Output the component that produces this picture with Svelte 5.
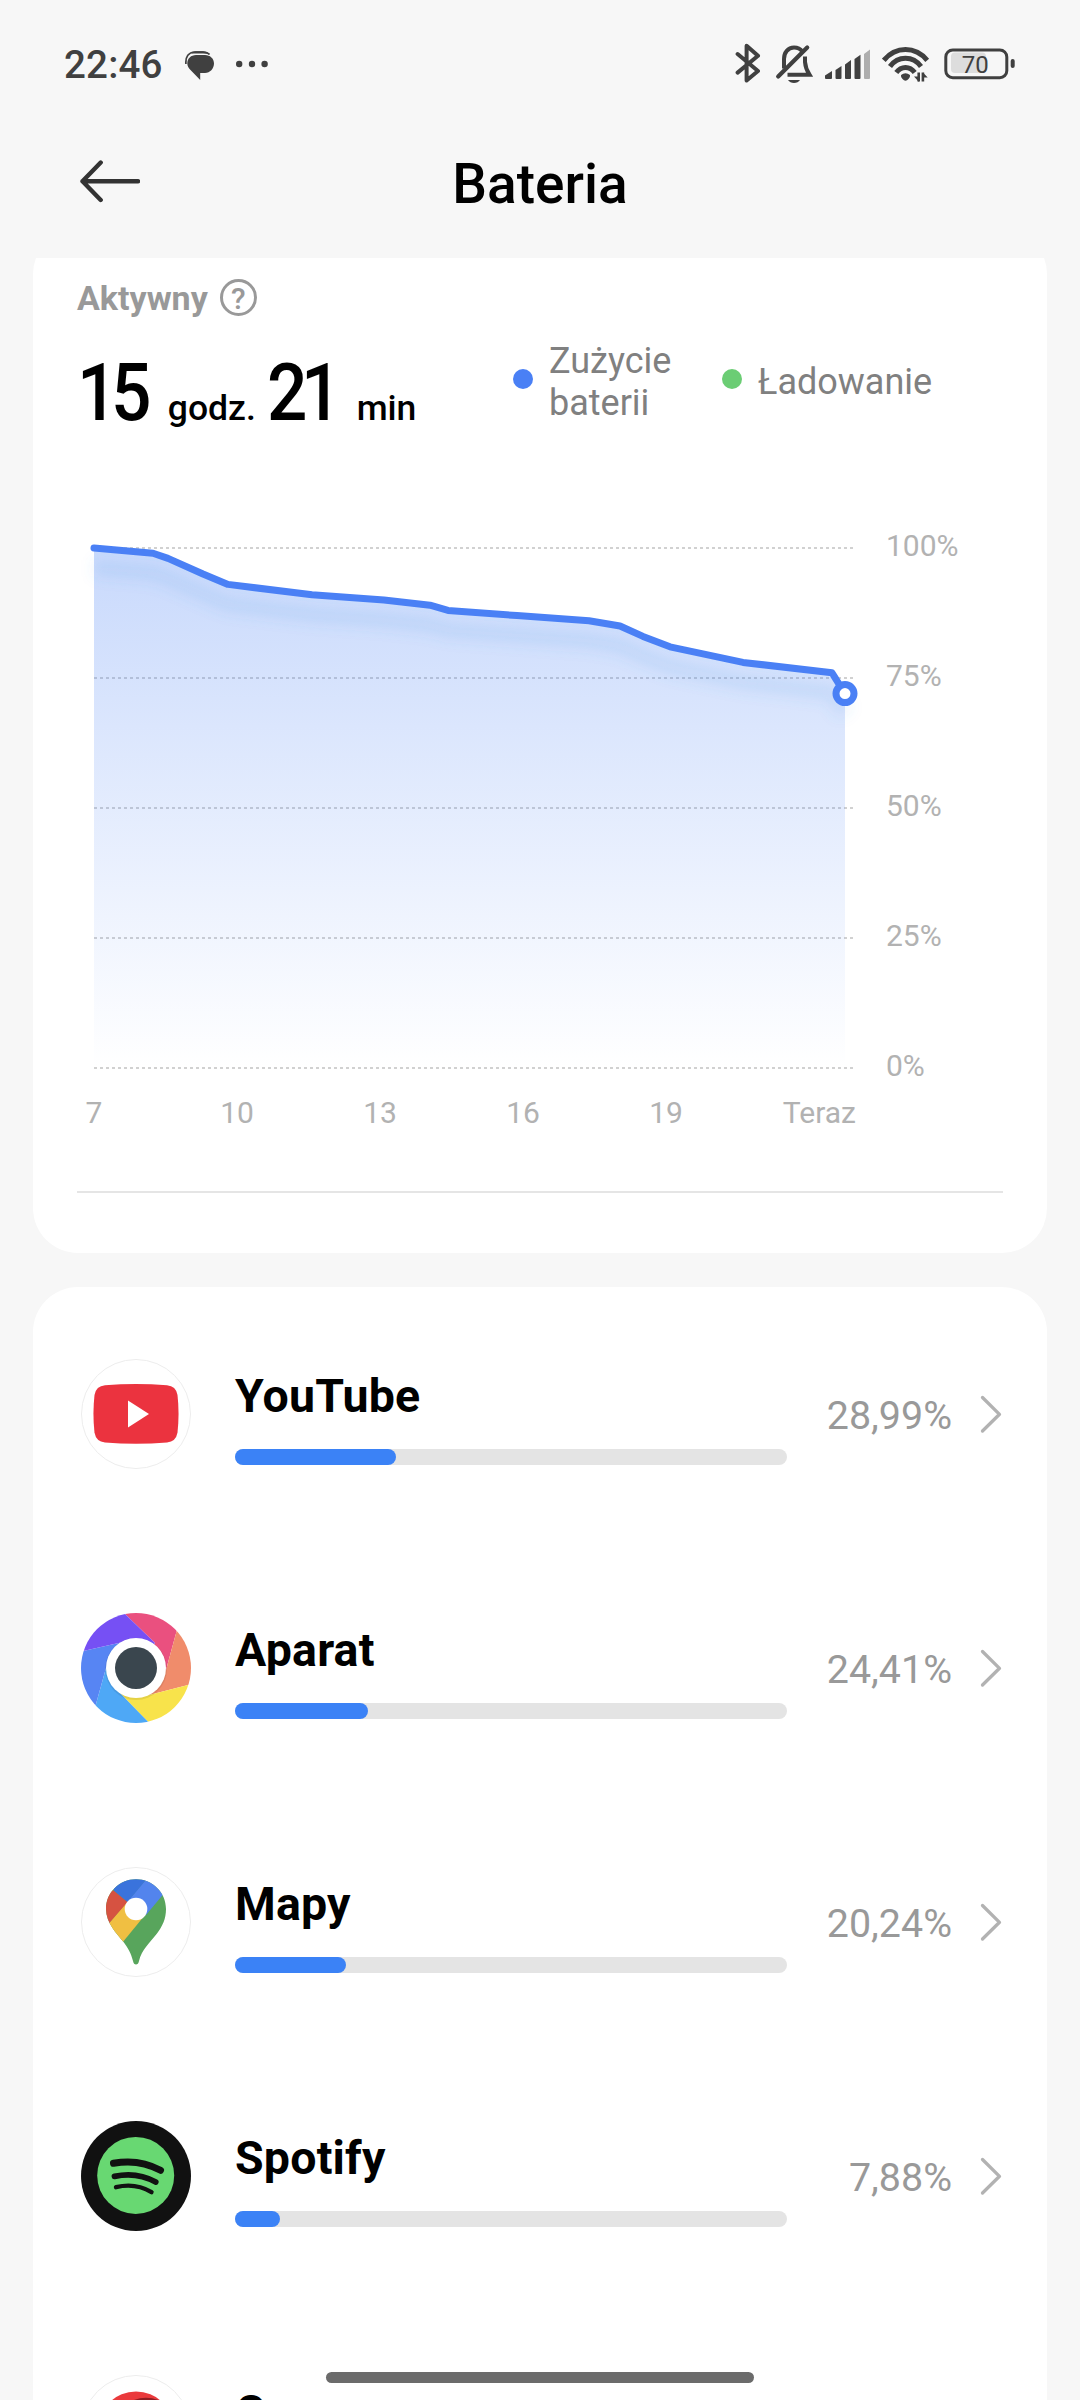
<script lang="ts">
	type App = {
		id: string;
		name: string;
		percent?: string;
		fill: number;
	};

	const apps: App[] = [
		{ id: 'youtube', name: 'YouTube', percent: '28,99%', fill: 29.2 },
		{ id: 'camera', name: 'Aparat', percent: '24,41%', fill: 24.1 },
		{ id: 'maps', name: 'Mapy', percent: '20,24%', fill: 20.1 },
		{ id: 'spotify', name: 'Spotify', percent: '7,88%', fill: 8.2 },
		{ id: 'opera', name: 'O', fill: 5.1 }
	];

	// x offset in the chart, battery level
	const history = [
		[17, 100],
		[76, 99],
		[91, 98],
		[126, 95],
		[151, 93],
		[235, 91],
		[307, 90],
		[353, 89],
		[371, 88],
		[440, 87],
		[512, 86],
		[543, 85],
		[566, 83],
		[593, 81],
		[666, 78],
		[755, 76],
		[768, 72]
	];

	const levels = [100, 75, 50, 25, 0];
	const hours = ['7', '10', '13', '16', '19'];

	const levelY = (level: number) => 48 + (100 - level) * 5.2;

	const points = history.map(([x, level]) => `${x},${levelY(level)}`).join(' ');
	const area = `17,568 ${points} 768,568`;
	const [lastX, lastLevel] = history[history.length - 1];
</script>

{#snippet appIcon(id: string)}
	<svg class="app-icon" viewBox="0 0 110 110">
		{#if id === 'youtube'}
			<circle class="rim" cx="55" cy="55" r="54.5" />
			<path
				fill="#eb333f"
				d="M24 26.2Q55 23.800 86 26.200Q95 27 96.500 36Q98.600 55 96.500 73.500Q95 82.600 86 83.500Q55 86 24 83.500Q15 82.600 13.500 73.500Q11.400 55 13.500 36Q15 27 24 26.200Z"
			/>
			<path fill="#fff" d="M47 41.500V68.500L68 55Z" />
		{:else if id === 'camera'}
			<clipPath id="camera-clip"><circle cx="55" cy="55" r="55" /></clipPath>
			<g clip-path="url(#camera-clip)">
				<path fill="#ea507f" d="M44 1L43 -10H110L95.700 17.700L85 57L55 55L74 30Z" />
				<path fill="#f08c6b" d="M95.700 17.700L110 -10H125V68L107 72L68 82L55 55L85 57Z" />
				<path fill="#f8e34b" d="M107 72L125 67V125H70L67 108.700L38 79L55 55L68 82Z" />
				<path fill="#4ea8f6" d="M67 108.700L84 125H0L15 91L25 55L55 55L38 79Z" />
				<path fill="#5785f3" d="M15 91L0 125V38.500L2.300 38L42 29L55 55L25 55Z" />
				<path fill="#7650f4" d="M2.300 38L-10 41V-10H33L44 1L74 30L55 55L42 29Z" />
			</g>
			<circle cx="55" cy="56" r="31" fill="#000" opacity="0.08" />
			<circle cx="55" cy="55" r="30" fill="#fff" />
			<circle cx="55" cy="55" r="21" fill="#3a464e" />
		{:else if id === 'maps'}
			<circle class="rim" cx="55" cy="55" r="54.5" />
			<clipPath id="pin-clip">
				<path
					d="M55 12.300C71.500 12.300 85 25.500 85 42C85 52 81.500 59 76 66.500C69 75.500 60.500 83 58 94C57.300 98.700 52.700 98.700 52 94C50 86 47 81 42.300 74.700C36 67 25 56 25 42C25 25.500 38.500 12.300 55 12.300Z"
				/>
			</clipPath>
			<g clip-path="url(#pin-clip)">
				<rect x="20" y="8" width="70" height="95" fill="#58a55c" />
				<path fill="#f0bf42" d="M24 61L46 35L64 48L39 78.500L20 78Z" />
				<path fill="#d65241" d="M33 23.700L46.500 35L24 61H10V20Z" />
				<path fill="#5384ed" d="M68 9L90 18L65 48L46 35Z" />
				<path fill="#3a73dc" d="M33 23.700L30 5H71.500L46.500 35Z" />
			</g>
			<circle cx="55" cy="42" r="11.300" fill="#fff" />
		{:else if id === 'spotify'}
			<circle cx="55" cy="55" r="55" fill="#111" />
			<circle cx="54.700" cy="54.400" r="38.500" fill="#68d872" />
			<g fill="none" stroke="#111" stroke-linecap="round">
				<path stroke-width="7" d="M32.500 42.300Q58 37.500 79.500 49.300" />
				<path stroke-width="5.800" d="M33.500 55.300Q56 50.500 74.700 61" />
				<path stroke-width="4.400" d="M35 66.200Q54.500 61.500 70.500 71.200" />
			</g>
		{:else}
			<circle class="rim" cx="55" cy="55" r="54.500" />
			<circle cx="55" cy="54" r="37.500" fill="#ea3a3c" />
			<path fill="#8f1d22" d="M53 25Q66 20 80 26Q92 38 92 54T80 82Q62 88 46 82Q62 54 53 25Z" />
			<ellipse cx="55" cy="54" rx="15" ry="25" fill="#fff" />
		{/if}
	</svg>
{/snippet}

<div class="screen">
	<div class="status-bar">
		<span class="clock">22:46</span>
		<svg class="chat" width="30" height="30" viewBox="0 0 30 30">
			<path
				fill="#404040"
				d="M11 4H20C25 4 29 7.500 29 12.500S25 22 20 22H15.200V29L6 19.500C3.500 17 2.300 15 2.300 12.500C2.300 7.500 6 4 11 4Z"
			/>
			<path fill="none" stroke="#404040" stroke-width="1.700" d="M0.900 13C0.400 5.500 3.500 1.300 10 1H18Q22 1 24.500 3.300" />
			<path fill="#404040" d="M6 2.400Q8 0.300 11 0.300H18Q22.500 0.300 25 3.500Q21 2.600 18 2.600H10Z" />
		</svg>
		<svg class="dots" width="32" height="8" viewBox="0 0 32 8" fill="#404040">
			<circle cx="3.200" cy="4" r="3.200" />
			<circle cx="16" cy="4" r="3.200" />
			<circle cx="28.600" cy="4" r="3.200" />
		</svg>

		<svg class="bluetooth" width="26" height="44" viewBox="0 0 26 44">
			<path
				fill="none"
				stroke="#404040"
				stroke-width="4"
				stroke-linecap="round"
				stroke-linejoin="round"
				d="M2.600 12L23 29L11.600 38.500V3.700L23 13.800L2.600 30.600"
			/>
		</svg>
		<svg class="bell" width="38" height="44" viewBox="0 0 38 44" fill="none" stroke="#404040">
			<path
				stroke-width="4"
				d="M9 26.500V17C9 10.500 13 5.600 19 5.600C22.500 5.600 25.500 7 27.300 9.500M30 14.500V20Q30.500 26.500 34.500 32.700H12.500"
			/>
			<path stroke-width="4.200" stroke-linecap="round" d="M3.200 34.500L32.200 5.400" />
			<path fill="#404040" stroke="none" d="M13 38H25Q23 41 19 41T13 38Z" />
		</svg>
		<svg class="signal" width="46" height="44" viewBox="0 0 46 44" fill="#404040">
			<path d="M0 33.500L7 29V36Q7 37 6 37H1Q0 37 0 36Z" />
			<path d="M10.500 28L16.500 24V36Q16.500 37 15.500 37H11.500Q10.500 37 10.500 36Z" />
			<path d="M20 22.500L26 18V36Q26 37 25 37H21Q20 37 20 36Z" />
			<path d="M29.500 17L35.500 12.700V36Q35.500 37 34.500 37H30.500Q29.500 37 29.500 36Z" />
			<path fill="#aeaeae" d="M39 12L45 7.600V36Q45 37 44 37H40Q39 37 39 36Z" />
		</svg>
		<svg class="wifi" width="48" height="44" viewBox="0 0 48 44" fill="none" stroke="#404040">
			<path stroke-width="5" d="M1.800 18.300Q11 7.600 23.500 7.600T45.200 18.300" />
			<path stroke-width="5" d="M8 24.500Q14 16.300 23.500 16.300T39 24.500" />
			<path stroke-width="5" d="M14.300 30.500Q18 25.500 23.500 25.500T32.700 30.500" />
			<path fill="#404040" stroke="none" d="M19 33Q23.500 29.500 28 33Q28.500 35 26.500 37Q23.500 40.500 20.500 37Q18.500 35 19 33Z" />
			<path stroke-width="2.600" d="M36.700 30.500V39.500M40.900 39.500V30.500" />
			<path fill="#404040" stroke="none" d="M32 34.500H37V40ZM45.700 35.500H41V30.500Z" />
		</svg>
		<svg class="battery" width="72" height="44" viewBox="0 0 72 44">
			<rect x="7" y="10.500" width="35" height="20.500" rx="4" fill="#ddd" />
			<rect x="1.800" y="7.900" width="61" height="27.800" rx="7" fill="none" stroke="#404040" stroke-width="3" />
			<rect x="66.700" y="17" width="4" height="9" rx="2" fill="#404040" />
			<text class="charge" x="31.300" y="30.600">70</text>
		</svg>
	</div>

	<header>
		<svg class="back" width="62" height="44" viewBox="0 0 62 44">
			<path
				fill="none"
				stroke="#333"
				stroke-width="4.400"
				stroke-linecap="round"
				stroke-linejoin="round"
				d="M60 22.300H4.500M22.700 3.500L4.500 22.300L22.700 41"
			/>
		</svg>
		<h1>Bateria</h1>
	</header>

	<main>
		<section class="card usage">
			<div class="active">
				<span>Aktywny</span>
				<span class="help">?</span>
			</div>
			<div class="summary">
				<div class="time">
					<span class="number">15</span>
					<span class="unit">godz.</span>
					<span class="number second">21</span>
					<span class="unit last">min</span>
				</div>
				<div class="legend">
					<span class="dot"></span>
					<span class="drain">Zużycie baterii</span>
					<span class="dot green"></span>
					<span>Ładowanie</span>
				</div>
			</div>

			<svg class="chart" width="926" height="640" viewBox="0 0 926 640">
				<defs>
					<linearGradient id="fade" gradientUnits="userSpaceOnUse" x1="0" y1="48" x2="0" y2="568">
						<stop offset="0" stop-color="#4880f5" stop-opacity="0.3" />
						<stop offset="1" stop-color="#4880f5" stop-opacity="0" />
					</linearGradient>
					<filter id="glow" filterUnits="userSpaceOnUse" x="0" y="20" width="820" height="240">
						<feGaussianBlur stdDeviation="7" />
					</filter>
				</defs>
				{#each levels as level}
					<line class="grid" x1="17" x2="777" y1={levelY(level)} y2={levelY(level)} />
					<text class="label" x="809" y={levelY(level) + 8}>{level}%</text>
				{/each}
				<polygon points={area} fill="url(#fade)" />
				<polyline class="shadow" {points} transform="translate(0 20)" filter="url(#glow)" />
				<polyline class="line" {points} />
				<circle class="marker" cx={lastX} cy={levelY(lastLevel)} r="9" />
				{#each hours as hour, i}
					<text class="label hour" x={17 + i * 143} y="623">{hour}</text>
				{/each}
				<text class="label now" x="779" y="623">Teraz</text>
			</svg>
			<hr />
		</section>

		<section class="card">
			{#each apps as app (app.id)}
				<div class="app">
					{@render appIcon(app.id)}
					<div class="info">
						<span class="name">{app.name}</span>
						<div class="track">
							<div class="fill" style:width={`${app.fill}%`}></div>
						</div>
					</div>
					<span class="percent">{app.percent ?? ''}</span>
					<svg class="chevron" width="24" height="40" viewBox="0 0 24 40">
						<path
							fill="none"
							stroke="#b2b2b2"
							stroke-width="3.300"
							stroke-linecap="round"
							stroke-linejoin="round"
							d="M3.500 3.500L20.500 20.300L3.500 37"
						/>
					</svg>
				</div>
			{/each}
		</section>
	</main>

	<div class="home-bar"></div>
</div>

<style>
	:global(body) {
		margin: 0;
		background: #f7f7f7;
	}

	.screen {
		position: relative;
		display: flex;
		flex-direction: column;
		width: 1080px;
		height: 2400px;
		overflow: hidden;
		background: #f7f7f7;
		font-family: Roboto, 'Noto Sans', sans-serif;
		color: #000;
	}

	svg {
		display: block;
		flex: none;
	}

	.status-bar {
		display: flex;
		align-items: center;
		height: 128px;
		box-sizing: border-box;
		padding: 0 64px 0 64px;
	}

	.clock {
		width: 121px;
		padding-top: 2px;
		font-size: 38.5px;
		font-weight: 500;
		line-height: 44px;
		letter-spacing: 0.2px;
		color: #404040;
	}

	.chat {
		margin-top: 4px;
	}

	.dots {
		margin-left: 21px;
	}

	.bluetooth {
		margin-left: auto;
	}

	.bell {
		margin-left: 14px;
	}

	.signal {
		margin-left: 12px;
	}

	.wifi {
		margin-left: 11px;
	}

	.battery {
		margin-left: 14px;
	}

	.charge {
		font-size: 24px;
		text-anchor: middle;
		fill: #404040;
	}

	header {
		display: grid;
		grid-template-columns: 62px 1fr 62px;
		align-items: center;
		height: 130px;
		box-sizing: border-box;
		padding: 0 78px 24px;
	}

	h1 {
		margin: 6px 0 0;
		font-size: 55px;
		font-weight: 500;
		line-height: 64px;
		text-align: center;
	}

	main {
		display: flex;
		flex: 1;
		flex-direction: column;
		gap: 34px;
		min-height: 0;
		overflow: hidden;
		padding: 0 33px;
	}

	.card {
		flex: none;
		border-radius: 45px;
		background: #fff;
	}

	.usage {
		margin-top: -29px;
		padding: 49px 44px 60px;
	}

	.active {
		display: flex;
		align-items: center;
		gap: 12px;
		height: 40px;
		font-size: 34px;
		font-weight: 700;
		color: #999;
	}

	.help {
		width: 31px;
		height: 31px;
		margin-bottom: 1px;
		border: 3px solid #999;
		border-radius: 50%;
		font-size: 30px;
		font-weight: 500;
		line-height: 33px;
		text-align: center;
	}

	.summary {
		display: flex;
		align-items: center;
		height: 127px;
	}

	.time {
		display: flex;
		align-items: baseline;
		width: 436px;
		margin-top: 39px;
		line-height: 93px;
		white-space: nowrap;
	}

	/* digits are narrower than the regular text face */
	.number {
		font-size: 79px;
		font-weight: 500;
		letter-spacing: -7px;
		transform: scaleX(0.9);
		transform-origin: left;
	}

	.second {
		margin-left: 11px;
	}

	.unit {
		margin-left: 15px;
		font-size: 35.5px;
		font-weight: 500;
	}

	.last {
		margin-left: 14px;
	}

	.legend {
		display: flex;
		align-items: center;
		font-size: 36px;
		line-height: 42px;
		color: #808080;
	}

	.drain {
		width: 173px;
	}

	.dot {
		width: 20px;
		height: 20px;
		margin: 0 16px 6px 0;
		border-radius: 50%;
		background: #4a80f5;
	}

	.green {
		background: #6bcd74;
	}

	.chart {
		margin-top: 55px;
	}

	.grid {
		stroke: #000;
		stroke-opacity: 0.18;
		stroke-width: 2;
		stroke-dasharray: 3 3;
	}

	.label {
		font-size: 30px;
		fill: #b2b2b2;
	}

	.hour {
		text-anchor: middle;
	}

	.now {
		text-anchor: end;
	}

	.line {
		fill: none;
		stroke: #4a80f5;
		stroke-width: 7;
		stroke-linecap: round;
		stroke-linejoin: round;
	}

	.shadow {
		fill: none;
		stroke: #4a90e2;
		stroke-opacity: 0.12;
		stroke-width: 16;
	}

	.marker {
		fill: #fff;
		stroke: #4a80f5;
		stroke-width: 7;
	}

	hr {
		height: 2px;
		margin: 51px 0 0;
		border: none;
		background: #e5e5e5;
	}

	.app {
		display: flex;
		align-items: center;
		height: 254px;
		padding: 0 44px 0 48px;
	}

	.app-icon {
		width: 110px;
		height: 110px;
	}

	.rim {
		fill: #fff;
		stroke: #ededed;
		stroke-width: 1;
	}

	.info {
		display: flex;
		flex-direction: column;
		gap: 20px;
		width: 552px;
		margin-left: 44px;
	}

	.name {
		font-size: 46.5px;
		font-weight: 700;
		line-height: 66px;
		letter-spacing: 0.2px;
	}

	.track {
		height: 16px;
		border-radius: 8px;
		background: #e4e4e4;
	}

	.fill {
		height: 100%;
		border-radius: 8px;
		background: #3b82f6;
	}

	.percent {
		flex: 1;
		margin-right: 27px;
		padding-top: 2px;
		font-size: 39.4px;
		text-align: right;
		color: #999;
	}

	.home-bar {
		position: absolute;
		left: 326px;
		bottom: 17px;
		width: 428px;
		height: 11px;
		border-radius: 6px;
		background: #6b6b6b;
	}
</style>
